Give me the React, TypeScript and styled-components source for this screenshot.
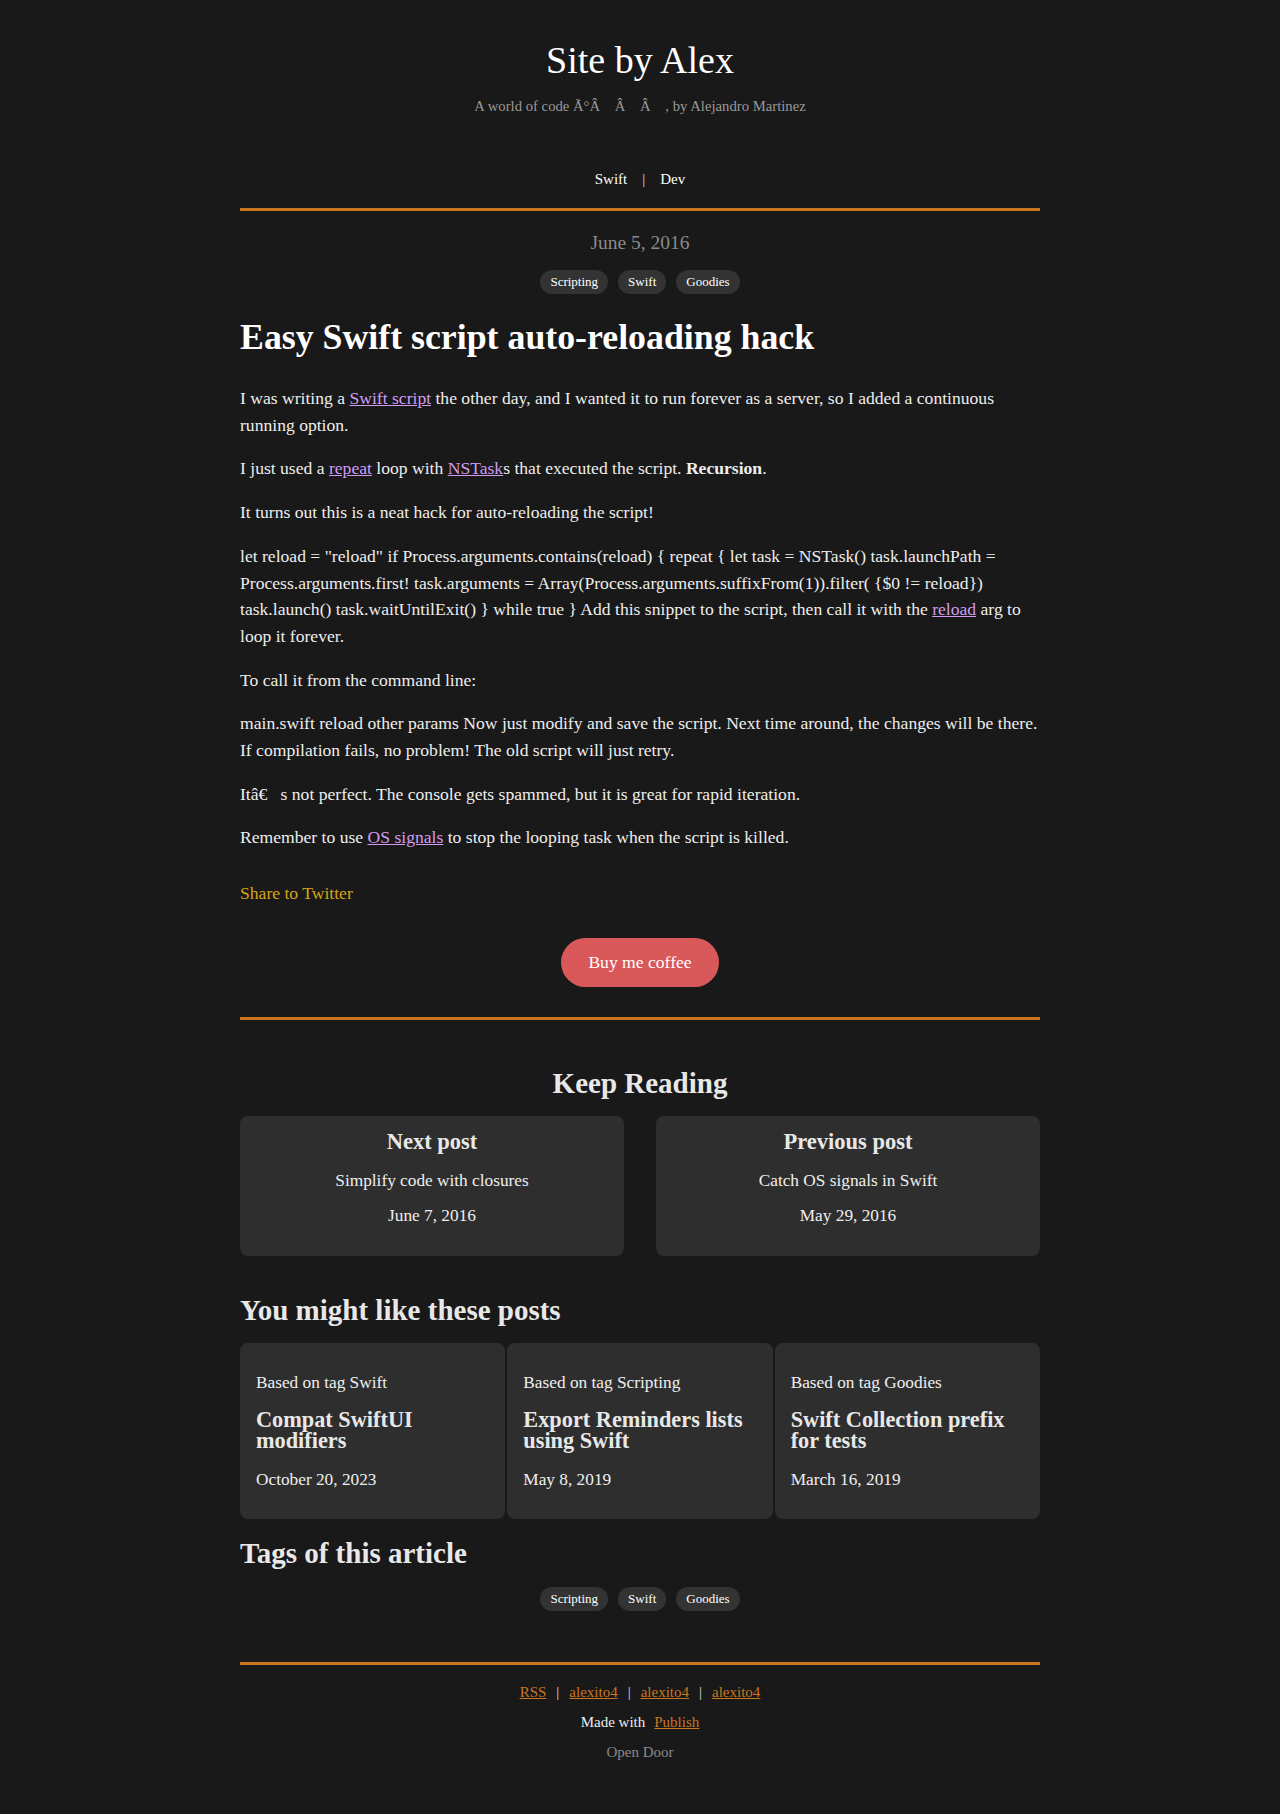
import React from "react";
import styled, { createGlobalStyle } from "styled-components";

const GlobalStyle = createGlobalStyle`
  html, body {
    margin: 0;
    padding: 0;
    background: #191919;
  }
  body {
    font-family: "Liberation Serif", "Times New Roman", serif;
    color: #eeeeee;
  }
  * { box-sizing: border-box; }
`;

const Page = styled.div`
  width: 800px;
  margin: 0 auto;
  padding: 37px 0 52px;
`;

const Header = styled.header`
  text-align: center;
`;

const SiteTitle = styled.h1`
  margin: 0;
  font-size: 38px;
  font-weight: normal;
  line-height: 46px;
  color: #ffffff;
`;

const Subtitle = styled.p`
  margin: 13px 0 0;
  font-size: 14.7px;
  line-height: 20px;
  color: #999999;
  white-space: pre;
`;

const Nav = styled.nav`
  margin-top: 53px;
  display: flex;
  justify-content: center;
  font-size: 15px;
  line-height: 20px;
  color: #ffffff;
`;

const NavLink = styled.a`
  color: #ffffff;
  text-decoration: none;
`;

const Sep = styled.span<{ $space: number }>`
  margin: 0 ${(p) => p.$space}px;
  color: #dddddd;
`;

const Rule = styled.hr<{ $top: number }>`
  margin: ${(p) => p.$top}px 0 0;
  border: 0;
  height: 3px;
  background: #c9761f;
`;

const DateLine = styled.div`
  margin-top: 20px;
  text-align: center;
  font-size: 19.5px;
  line-height: 24px;
  color: #8a8a8a;
`;

const TagList = styled.div<{ $top: number }>`
  margin-top: ${(p) => p.$top}px;
  display: flex;
  justify-content: center;
  gap: 10px;
`;

const Tag = styled.a`
  display: inline-flex;
  align-items: center;
  height: 24px;
  padding: 0 10px;
  border-radius: 12px;
  background: #333333;
  color: #ffffff;
  font-size: 13px;
  text-decoration: none;
`;

const ArticleTitle = styled.h1`
  margin: 23px 0 0;
  font-size: 35.8px;
  font-weight: bold;
  line-height: 40px;
  color: #ffffff;
`;

const Body = styled.div`
  margin-top: 28px;
  display: flex;
  flex-direction: column;
  gap: 17px;
`;

const Para = styled.p`
  margin: 0;
  font-size: 17.6px;
  line-height: 26.7px;
  color: #eeeeee;
`;

const InlineLink = styled.a`
  color: #d19cf2;
  text-decoration: underline;
`;

const Share = styled.a`
  display: block;
  margin-top: 29px;
  font-size: 17.6px;
  line-height: 26.7px;
  color: #d6a517;
  text-decoration: none;
`;

const CoffeeRow = styled.div`
  margin-top: 31px;
  display: flex;
  justify-content: center;
`;

const CoffeeButton = styled.a`
  display: inline-flex;
  align-items: center;
  justify-content: center;
  width: 158px;
  height: 49px;
  border-radius: 25px;
  background: #d9585a;
  color: #ffffff;
  font-size: 17.6px;
  text-decoration: none;
`;

const SectionTitle = styled.h2<{ $top: number; $center?: boolean }>`
  margin: ${(p) => p.$top}px 0 0;
  font-size: 29px;
  font-weight: bold;
  line-height: 30px;
  color: #e8e8e8;
  text-align: ${(p) => (p.$center ? "center" : "left")};
`;

const NeighbourGrid = styled.div`
  margin-top: 18px;
  display: grid;
  grid-template-columns: 1fr 1fr;
  gap: 32px;
`;

const NeighbourCard = styled.a`
  display: block;
  height: 140px;
  padding: 14px 16px 28px;
  border-radius: 8px;
  background: #2e2e2e;
  text-align: center;
  color: #eeeeee;
  text-decoration: none;
`;

const NeighbourHeading = styled.div`
  font-size: 22.5px;
  font-weight: bold;
  line-height: 24px;
  color: #e8e8e8;
`;

const NeighbourText = styled.div<{ $top: number }>`
  margin-top: ${(p) => p.$top}px;
  font-size: 17.3px;
  line-height: 24px;
  color: #eeeeee;
`;

const LikeGrid = styled.div`
  margin-top: 18px;
  display: grid;
  grid-template-columns: repeat(3, 1fr);
  gap: 2px;
`;

const LikeCard = styled.a`
  display: block;
  padding: 28px 16px 27px;
  border-radius: 8px;
  background: #2e2e2e;
  color: #eeeeee;
  text-decoration: none;
`;

const LikeLabel = styled.div`
  font-size: 17.3px;
  line-height: 24px;
  color: #eeeeee;
`;

const LikeTitle = styled.div`
  margin-top: 14.5px;
  font-size: 22.3px;
  font-weight: bold;
  line-height: 21px;
  color: #e8e8e8;
`;

const LikeDate = styled.div`
  margin-top: 16.5px;
  font-size: 17.3px;
  line-height: 24px;
  color: #eeeeee;
`;

const Footer = styled.footer`
  margin-top: 17px;
  text-align: center;
  font-size: 15px;
  line-height: 20px;
`;

const FooterRow = styled.div<{ $top: number; $muted?: boolean }>`
  margin-top: ${(p) => p.$top}px;
  color: ${(p) => (p.$muted ? "#8a8a8a" : "#eeeeee")};
`;

const FooterLink = styled.a<{ $gap?: number }>`
  color: #c9761f;
  text-decoration: underline;
  margin-left: ${(p) => p.$gap ?? 0}px;
`;

const tags = ["Scripting", "Swift", "Goodies"];

const likes = [
  { tag: "Swift", title: "Compat SwiftUI modifiers", date: "October 20, 2023" },
  { tag: "Scripting", title: "Export Reminders lists using Swift", date: "May 8, 2019" },
  { tag: "Goodies", title: "Swift Collection prefix for tests", date: "March 16, 2019" },
];

export default function App() {
  return (
    <>
      <GlobalStyle />
      <Page>
        <Header>
          <SiteTitle>Site by Alex</SiteTitle>
          <Subtitle>
            {"A world of code Ã°Â\u00a0\u00a0\u00a0 Â\u00a0\u00a0\u00a0 Â\u00a0\u00a0\u00a0 , by Alejandro Martinez"}
          </Subtitle>
          <Nav>
            <NavLink href="#">Swift</NavLink>
            <Sep $space={15}>|</Sep>
            <NavLink href="#">Dev</NavLink>
          </Nav>
        </Header>
        <Rule $top={19} />

        <DateLine>June 5, 2016</DateLine>
        <TagList $top={15}>
          {tags.map((t) => (
            <Tag key={t} href="#">
              {t}
            </Tag>
          ))}
        </TagList>
        <ArticleTitle>Easy Swift script auto-reloading hack</ArticleTitle>

        <Body>
          <Para>
            I was writing a <InlineLink href="#">Swift script</InlineLink> the other day, and I
            wanted it to run forever as a server, so I added a continuous running option.
          </Para>
          <Para>
            I just used a <InlineLink href="#">repeat</InlineLink> loop with{" "}
            <InlineLink href="#">NSTask</InlineLink>s that executed the script.{" "}
            <strong>Recursion</strong>.
          </Para>
          <Para>It turns out this is a neat hack for auto-reloading the script!</Para>
          <Para>
            {
              'let reload = "reload" if Process.arguments.contains(reload) { repeat { let task = NSTask() task.launchPath = Process.arguments.first! task.arguments = Array(Process.arguments.suffixFrom(1)).filter( {$0 != reload}) task.launch() task.waitUntilExit() } while true } Add this snippet to the script, then call it with the '
            }
            <InlineLink href="#">reload</InlineLink> arg to loop it forever.
          </Para>
          <Para>To call it from the command line:</Para>
          <Para>
            main.swift reload other params Now just modify and save the script. Next time around,
            the changes will be there. If compilation fails, no problem! The old script will just
            retry.
          </Para>
          <Para>
            {"Itâ€\u00a0\u00a0\u00a0s not perfect. The console gets spammed, but it is great for rapid iteration."}
          </Para>
          <Para>
            Remember to use <InlineLink href="#">OS signals</InlineLink> to stop the looping task
            when the script is killed.
          </Para>
        </Body>

        <Share href="#">Share to Twitter</Share>
        <CoffeeRow>
          <CoffeeButton href="#">Buy me coffee</CoffeeButton>
        </CoffeeRow>
        <Rule $top={30} />

        <SectionTitle $top={48} $center>
          Keep Reading
        </SectionTitle>
        <NeighbourGrid>
          <NeighbourCard href="#">
            <NeighbourHeading>Next post</NeighbourHeading>
            <NeighbourText $top={15}>Simplify code with closures</NeighbourText>
            <NeighbourText $top={11}>June 7, 2016</NeighbourText>
          </NeighbourCard>
          <NeighbourCard href="#">
            <NeighbourHeading>Previous post</NeighbourHeading>
            <NeighbourText $top={15}>Catch OS signals in Swift</NeighbourText>
            <NeighbourText $top={11}>May 29, 2016</NeighbourText>
          </NeighbourCard>
        </NeighbourGrid>

        <SectionTitle $top={39}>You might like these posts</SectionTitle>
        <LikeGrid>
          {likes.map((l) => (
            <LikeCard key={l.title} href="#">
              <LikeLabel>Based on tag {l.tag}</LikeLabel>
              <LikeTitle>{l.title}</LikeTitle>
              <LikeDate>{l.date}</LikeDate>
            </LikeCard>
          ))}
        </LikeGrid>

        <SectionTitle $top={19}>Tags of this article</SectionTitle>
        <TagList $top={19}>
          {tags.map((t) => (
            <Tag key={t} href="#">
              {t}
            </Tag>
          ))}
        </TagList>

        <Rule $top={51} />
        <Footer>
          <FooterRow $top={0}>
            <FooterLink href="#">RSS</FooterLink>
            <Sep $space={10}>|</Sep>
            <FooterLink href="#">alexito4</FooterLink>
            <Sep $space={10}>|</Sep>
            <FooterLink href="#">alexito4</FooterLink>
            <Sep $space={10}>|</Sep>
            <FooterLink href="#">alexito4</FooterLink>
          </FooterRow>
          <FooterRow $top={10}>
            Made with<FooterLink href="#" $gap={9}>Publish</FooterLink>
          </FooterRow>
          <FooterRow $top={10} $muted>
            Open Door
          </FooterRow>
        </Footer>
      </Page>
    </>
  );
}
